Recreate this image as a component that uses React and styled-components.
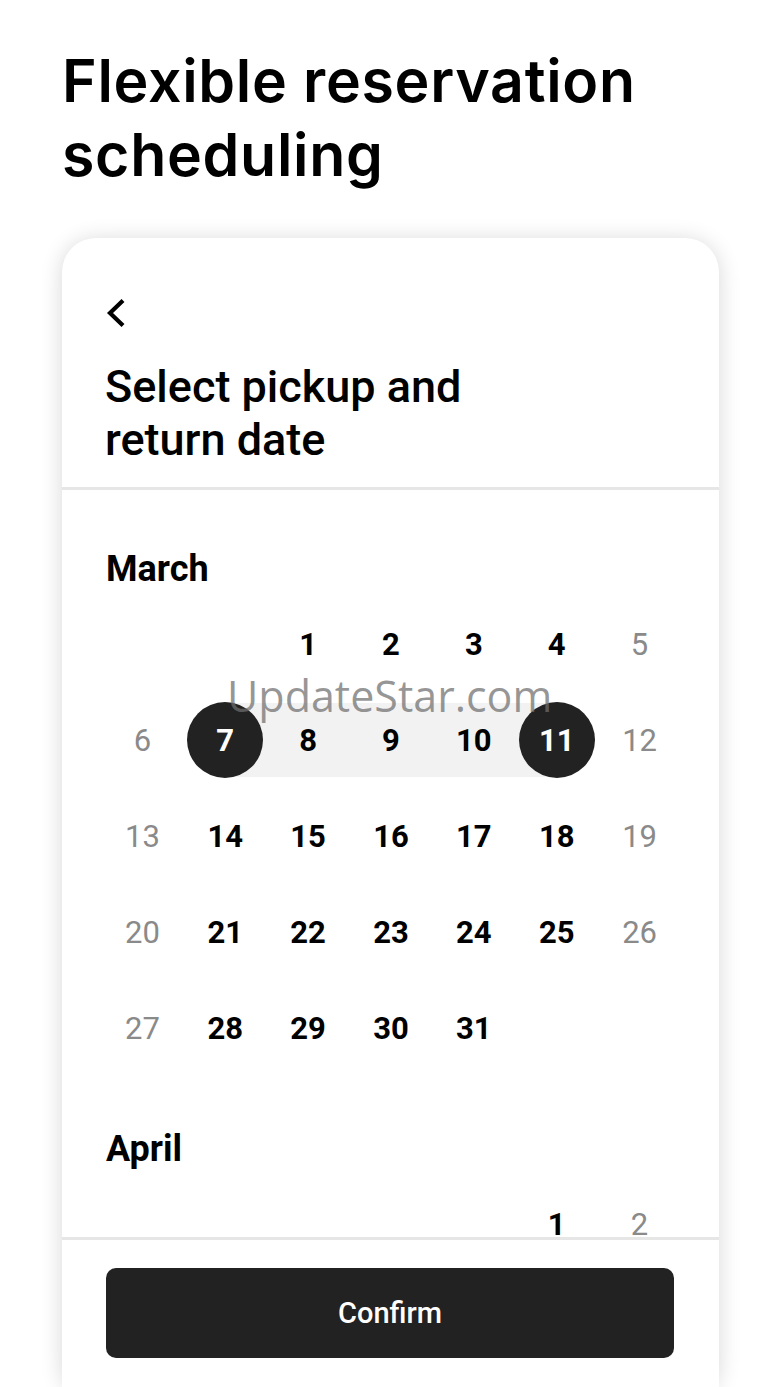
import React from "react";
import styled, { createGlobalStyle, css } from "styled-components";

const GlobalStyle = createGlobalStyle`
  html, body {
    margin: 0;
    padding: 0;
    background: #ffffff;
  }
  body {
    font-family: Roboto, "Noto Sans", sans-serif;
    color: #000;
    overflow: hidden;
  }
`;

const Page = styled.div`
  width: 780px;
  height: 1387px;
  box-sizing: border-box;
  padding: 44px 61px 0 62px;
  overflow: hidden;
`;

const Headline = styled.h1`
  margin: 0 0 46px;
  font-family: Inter, Roboto, sans-serif;
  font-weight: 600;
  font-size: 59px;
  line-height: 74px;
  letter-spacing: 0.7px;
  color: #000;
`;

const Card = styled.section`
  position: relative;
  background: #fff;
  border-radius: 34px;
  box-shadow: 0 2px 22px rgba(0, 0, 0, 0.16);
  display: flex;
  flex-direction: column;
`;

const Header = styled.header`
  padding: 60px 40px 21px 43px;
  border-bottom: 3px solid #e6e6e6;
  display: flex;
  flex-direction: column;
  gap: 32px;
`;

const BackButton = styled.button`
  width: 22px;
  height: 30px;
  padding: 0;
  border: 0;
  background: none;
  display: flex;
  align-items: center;
  justify-content: flex-start;
  cursor: pointer;
`;

const Title = styled.h2`
  margin: 0;
  font-family: Roboto, sans-serif;
  font-weight: 500;
  font-size: 45px;
  line-height: 53px;
  color: #000;
`;

const ScrollArea = styled.div`
  height: 747px;
  overflow: hidden;
  padding: 57px 38px 0 39px;
  box-sizing: border-box;
  display: flex;
  flex-direction: column;
  gap: 51px;
`;

const MonthBlock = styled.div`
  display: flex;
  flex-direction: column;
  gap: 5px;
`;

const MonthName = styled.h3`
  margin: 0 0 0 5px;
  font-family: Roboto, sans-serif;
  font-weight: 700;
  font-size: 36px;
  line-height: 44px;
  color: #000;
`;

const Grid = styled.div`
  display: grid;
  grid-template-columns: repeat(7, 1fr);
  grid-auto-rows: 96px;
`;

const Cell = styled.div`
  position: relative;
  display: flex;
  align-items: center;
  justify-content: center;

  ${({ $band }) =>
    $band &&
    css`
      &::before {
        content: "";
        position: absolute;
        top: 11px;
        bottom: 11px;
        left: ${$band === "start" ? "50%" : "0"};
        right: ${$band === "end" ? "50%" : "0"};
        background: #f2f2f2;
      }
    `}
`;

const Day = styled.span`
  position: relative;
  width: 76px;
  height: 76px;
  border-radius: 50%;
  display: flex;
  align-items: center;
  justify-content: center;
  font-family: Roboto, sans-serif;
  font-size: 31px;
  line-height: 1;
  font-weight: ${({ $muted }) => ($muted ? 400 : 700)};
  color: ${({ $muted, $selected }) =>
    $selected ? "#fff" : $muted ? "#8a8a8a" : "#000"};
  background: ${({ $selected }) => ($selected ? "#222222" : "transparent")};
`;

const Footer = styled.footer`
  border-top: 3px solid #e6e6e6;
  padding: 28px 45px 40px 44px;
  background: #fff;
`;

const ConfirmButton = styled.button`
  width: 100%;
  height: 90px;
  border: 0;
  border-radius: 10px;
  background: #222222;
  color: #fff;
  font-family: Roboto, sans-serif;
  font-weight: 500;
  font-size: 29px;
  cursor: pointer;
`;

const Watermark = styled.div`
  position: absolute;
  left: 165px;
  top: 433px;
  font-family: "Open Sans", sans-serif;
  font-weight: 400;
  font-size: 43px;
  line-height: 50px;
  color: rgba(110, 110, 110, 0.72);
  pointer-events: none;
  white-space: nowrap;
`;

const ChevronLeft = () => (
  <svg width="22" height="30" viewBox="0 0 22 30" fill="none">
    <path
      d="M18 2.5 L5 15 L18 27.5"
      stroke="#000"
      strokeWidth="4.2"
      strokeLinecap="butt"
      strokeLinejoin="miter"
    />
  </svg>
);

const buildMonth = (startCol, days) => {
  const cells = [];
  for (let i = 0; i < startCol; i++) cells.push(null);
  for (let d = 1; d <= days; d++) cells.push(d);
  return cells;
};

const Month = ({ name, startCol, days, range }) => {
  const cells = buildMonth(startCol, days);
  return (
    <MonthBlock>
      <MonthName>{name}</MonthName>
      <Grid>
        {cells.map((d, i) => {
          if (d === null) return <Cell key={`e${i}`} />;
          const col = i % 7;
          const muted = col === 0 || col === 6;
          let band = null;
          let selected = false;
          if (range) {
            if (d === range[0]) {
              band = "start";
              selected = true;
            } else if (d === range[1]) {
              band = "end";
              selected = true;
            } else if (d > range[0] && d < range[1]) {
              band = "mid";
            }
          }
          return (
            <Cell key={d} $band={band}>
              <Day $muted={muted && !selected} $selected={selected}>
                {d}
              </Day>
            </Cell>
          );
        })}
      </Grid>
    </MonthBlock>
  );
};

export default function App() {
  return (
    <>
      <GlobalStyle />
      <Page>
        <Headline>
          Flexible reservation
          <br />
          scheduling
        </Headline>
        <Card>
          <Header>
            <BackButton aria-label="Back">
              <ChevronLeft />
            </BackButton>
            <Title>
              Select pickup and
              <br />
              return date
            </Title>
          </Header>
          <ScrollArea>
            <Month name="March" startCol={2} days={31} range={[7, 11]} />
            <Month name="April" startCol={5} days={2} />
          </ScrollArea>
          <Footer>
            <ConfirmButton>Confirm</ConfirmButton>
          </Footer>
          <Watermark>UpdateStar.com</Watermark>
        </Card>
      </Page>
    </>
  );
}
